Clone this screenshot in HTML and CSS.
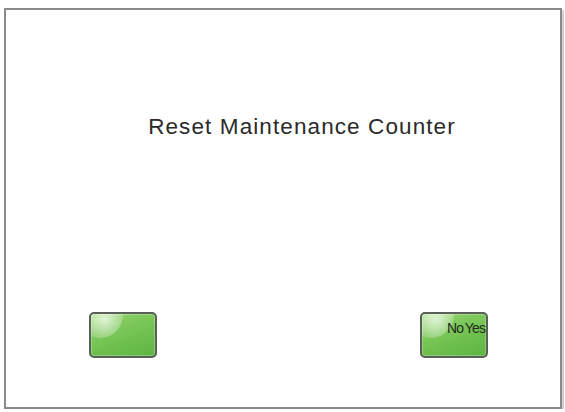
FILE: index.html
```html
<!DOCTYPE html>
<html lang="en">
<head>
<meta charset="utf-8">
<title>Reset Maintenance Counter</title>
<link rel="stylesheet" href="styles.css">
</head>
<body>
  <div class="screen">
    <h1 class="title">Reset Maintenance Counter</h1>
    <div class="actions">
      <button class="key" type="button"></button>
      <button class="key key-labelled" type="button"><span class="key-label">No Yes</span></button>
    </div>
  </div>
</body>
</html>
```
FILE: styles.css
```css
html, body {
  margin: 0;
  padding: 0;
  background: #ffffff;
}

body {
  padding: 8px 0 0 4px;
  font-family: "Liberation Sans", Arial, sans-serif;
}

.screen {
  box-sizing: border-box;
  width: 558px;
  height: 401px;
  border: 2px solid #8a8a8a;
  box-shadow: 2px 2px 0 #d0d0d0;
  display: flex;
  flex-direction: column;
  background: #ffffff;
}

.title {
  margin: 0;
  padding: 104px 0 0 38px;
  text-align: center;
  font-size: 22.5px;
  font-weight: normal;
  letter-spacing: 1.1px;
  line-height: 26px;
  color: #2a2a2a;
}

.actions {
  margin-top: auto;
  display: flex;
  justify-content: space-between;
  padding: 0 72px 49px 83px;
}

.key {
  position: relative;
  width: 68px;
  height: 46px;
  padding: 0;
  border: 2px solid #5a5f58;
  border-radius: 5px;
  background: linear-gradient(160deg, #a3dd80 0%, #80ca5e 30%, #6cbf4c 65%, #5fb542 100%);
  box-shadow: inset 0 0 0 1px rgba(255, 255, 255, 0.25);
  overflow: hidden;
  cursor: pointer;
}

/* glossy highlight in the top-left corner */
.key::before {
  content: "";
  position: absolute;
  left: -14px;
  top: -22px;
  width: 46px;
  height: 46px;
  border-radius: 50%;
  background: radial-gradient(circle at 60% 60%, rgba(255, 255, 255, 0.7) 0%, rgba(255, 255, 255, 0.3) 40%, rgba(255, 255, 255, 0) 70%);
}

.key-labelled {
  display: flex;
  justify-content: flex-end;
  align-items: flex-start;
}

.key-label {
  position: relative;
  margin: 6px 1px 0 0;
  font-family: "Liberation Sans", Arial, sans-serif;
  font-size: 14px;
  letter-spacing: -0.9px;
  word-spacing: -1px;
  color: #1f2a1a;
}
```
